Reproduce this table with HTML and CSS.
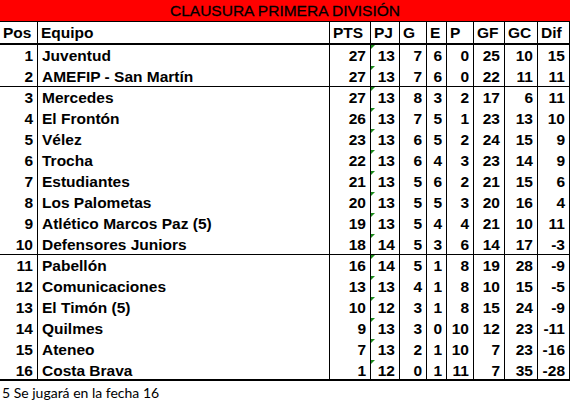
FILE: index.html
```html
<!DOCTYPE html>
<html lang="es">
<head>
<meta charset="utf-8">
<title>Clausura Primera División</title>
<link rel="stylesheet" href="styles.css">
</head>
<body>
<div class="sheet">
  <div class="title">CLAUSURA PRIMERA DIVISIÓN</div>
  <div class="row head">
    <div class="c">Pos</div><div class="c">Equipo</div><div class="c">PTS</div><div class="c">PJ</div><div class="c">G</div><div class="c">E</div><div class="c">P</div><div class="c">GF</div><div class="c">GC</div><div class="c">Dif</div>
  </div>
  <div class="row"><div class="c n">1</div><div class="c">Juventud</div><div class="c n">27</div><div class="c n pj">13</div><div class="c n">7</div><div class="c n">6</div><div class="c n">0</div><div class="c n">25</div><div class="c n">10</div><div class="c n">15</div></div>
  <div class="row sep"><div class="c n">2</div><div class="c">AMEFIP - San Martín</div><div class="c n">27</div><div class="c n pj">13</div><div class="c n">7</div><div class="c n">6</div><div class="c n">0</div><div class="c n">22</div><div class="c n">11</div><div class="c n">11</div></div>
  <div class="row"><div class="c n">3</div><div class="c">Mercedes</div><div class="c n">27</div><div class="c n pj">13</div><div class="c n">8</div><div class="c n">3</div><div class="c n">2</div><div class="c n">17</div><div class="c n">6</div><div class="c n">11</div></div>
  <div class="row"><div class="c n">4</div><div class="c">El Frontón</div><div class="c n">26</div><div class="c n pj">13</div><div class="c n">7</div><div class="c n">5</div><div class="c n">1</div><div class="c n">23</div><div class="c n">13</div><div class="c n">10</div></div>
  <div class="row"><div class="c n">5</div><div class="c">Vélez</div><div class="c n">23</div><div class="c n pj">13</div><div class="c n">6</div><div class="c n">5</div><div class="c n">2</div><div class="c n">24</div><div class="c n">15</div><div class="c n">9</div></div>
  <div class="row"><div class="c n">6</div><div class="c">Trocha</div><div class="c n">22</div><div class="c n pj">13</div><div class="c n">6</div><div class="c n">4</div><div class="c n">3</div><div class="c n">23</div><div class="c n">14</div><div class="c n">9</div></div>
  <div class="row"><div class="c n">7</div><div class="c">Estudiantes</div><div class="c n">21</div><div class="c n pj">13</div><div class="c n">5</div><div class="c n">6</div><div class="c n">2</div><div class="c n">21</div><div class="c n">15</div><div class="c n">6</div></div>
  <div class="row"><div class="c n">8</div><div class="c">Los Palometas</div><div class="c n">20</div><div class="c n pj">13</div><div class="c n">5</div><div class="c n">5</div><div class="c n">3</div><div class="c n">20</div><div class="c n">16</div><div class="c n">4</div></div>
  <div class="row"><div class="c n">9</div><div class="c">Atlético Marcos Paz (5)</div><div class="c n">19</div><div class="c n pj">13</div><div class="c n">5</div><div class="c n">4</div><div class="c n">4</div><div class="c n">21</div><div class="c n">10</div><div class="c n">11</div></div>
  <div class="row sep"><div class="c n">10</div><div class="c">Defensores Juniors</div><div class="c n">18</div><div class="c n pj">14</div><div class="c n">5</div><div class="c n">3</div><div class="c n">6</div><div class="c n">14</div><div class="c n">17</div><div class="c n">-3</div></div>
  <div class="row"><div class="c n">11</div><div class="c">Pabellón</div><div class="c n">16</div><div class="c n pj">14</div><div class="c n">5</div><div class="c n">1</div><div class="c n">8</div><div class="c n">19</div><div class="c n">28</div><div class="c n">-9</div></div>
  <div class="row"><div class="c n">12</div><div class="c">Comunicaciones</div><div class="c n">13</div><div class="c n pj">13</div><div class="c n">4</div><div class="c n">1</div><div class="c n">8</div><div class="c n">10</div><div class="c n">15</div><div class="c n">-5</div></div>
  <div class="row"><div class="c n">13</div><div class="c">El Timón (5)</div><div class="c n">10</div><div class="c n pj">12</div><div class="c n">3</div><div class="c n">1</div><div class="c n">8</div><div class="c n">15</div><div class="c n">24</div><div class="c n">-9</div></div>
  <div class="row"><div class="c n">14</div><div class="c">Quilmes</div><div class="c n">9</div><div class="c n pj">13</div><div class="c n">3</div><div class="c n">0</div><div class="c n">10</div><div class="c n">12</div><div class="c n">23</div><div class="c n">-11</div></div>
  <div class="row"><div class="c n">15</div><div class="c">Ateneo</div><div class="c n">7</div><div class="c n pj">13</div><div class="c n">2</div><div class="c n">1</div><div class="c n">10</div><div class="c n">7</div><div class="c n">23</div><div class="c n">-16</div></div>
  <div class="row last"><div class="c n">16</div><div class="c">Costa Brava</div><div class="c n">1</div><div class="c n pj">12</div><div class="c n">0</div><div class="c n">1</div><div class="c n">11</div><div class="c n">7</div><div class="c n">35</div><div class="c n">-28</div></div>
  <div class="note">5 Se jugará en la fecha 16</div>
</div>
</body>
</html>
```
FILE: styles.css
```css
html, body {
  margin: 0;
  padding: 0;
  background: #fff;
}
.sheet {
  width: 570px;
  font-family: "Liberation Sans", Arial, sans-serif;
  color: #000;
}
.title {
  height: 21px;
  line-height: 22px;
  background: #ff0000;
  border-bottom: 1px solid #000;
  text-align: center;
  font-size: 15.5px;
  color: #000;
  -webkit-text-stroke: 0.3px #000;
}
.row {
  display: grid;
  grid-template-columns: 38px 292px 41px 29px 27px 20px 27px 31px 33px 32px;
  height: 21px;
  box-sizing: border-box;
  font-size: 15.5px;
  font-weight: bold;
}
.row.head {
  height: 23px;
  border-bottom: 2px solid #000;
}
.row.sep {
  border-bottom: 1px solid #000;
}
.row.last {
  border-bottom: 2px solid #000;
}
.c {
  border-right: 1px solid #000;
  padding: 0 3px 0 4px;
  line-height: 21px;
  white-space: nowrap;
  overflow: hidden;
  position: relative;
}
.head .c {
  padding-left: 3px;
  line-height: 22px;
}
.c.n {
  text-align: right;
  padding-right: 4px;
  padding-left: 0;
}
.c.pj::before {
  content: "";
  position: absolute;
  left: 0;
  top: 0;
  border-top: 4px solid #1c8c1c;
  border-right: 4px solid transparent;
}
.note {
  font-family: Lato, "Liberation Sans", sans-serif;
  font-size: 14px;
  padding: 4px 0 0 2px;
  line-height: 16px;
}
```
